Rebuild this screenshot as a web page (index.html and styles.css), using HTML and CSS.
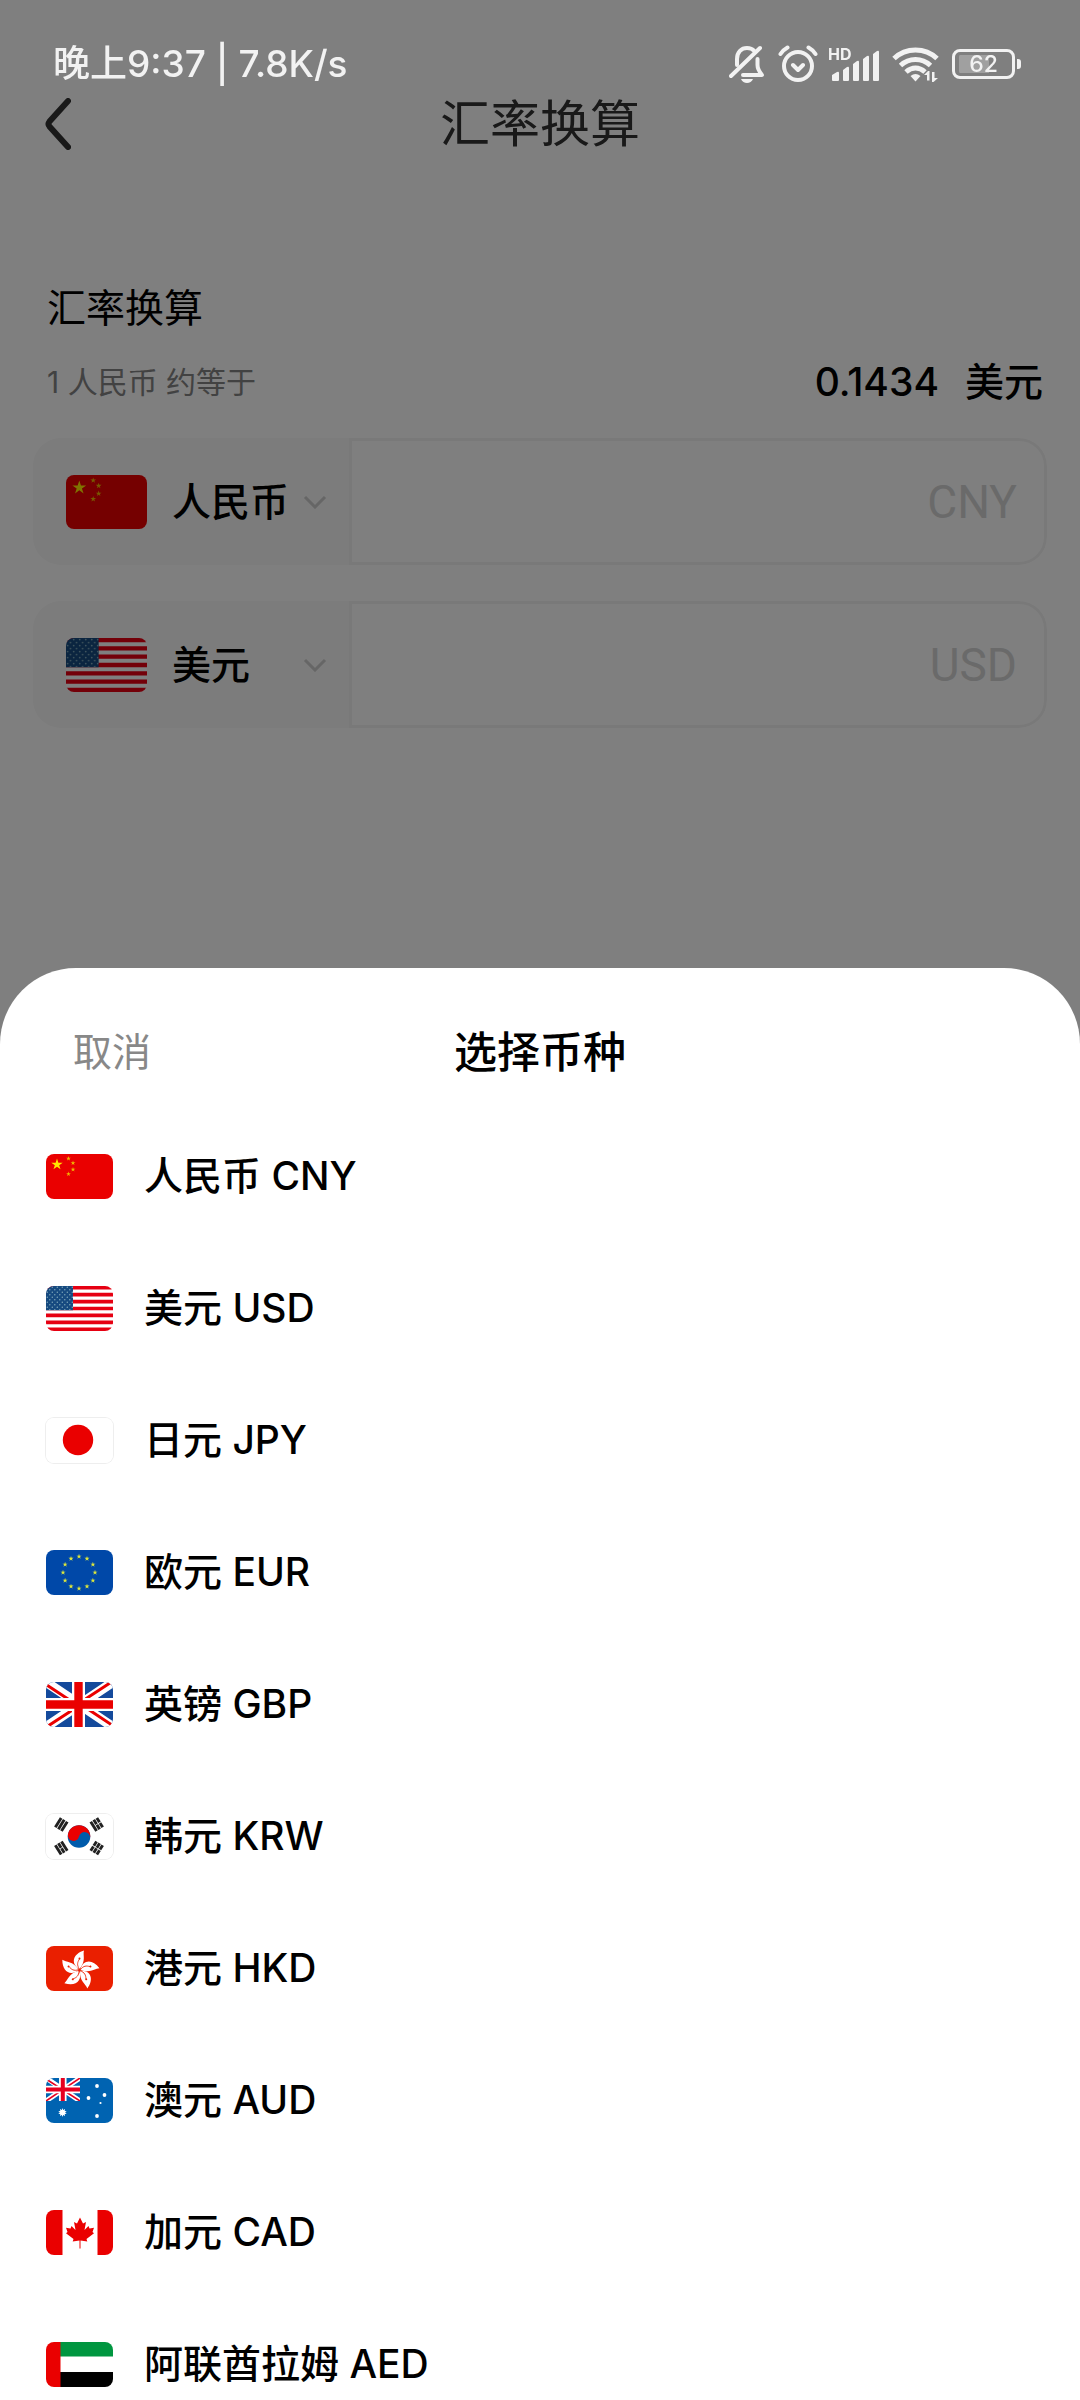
FILE: index.html
```html
<!DOCTYPE html>
<html lang="zh-CN">
<head>
<meta charset="utf-8">
<meta name="viewport" content="width=device-width, initial-scale=1">
<title>汇率换算</title>
<link rel="stylesheet" href="styles.css">
</head>
<body>

<svg class="defs" aria-hidden="true">
  <symbol id="star" viewBox="-1 -1 2 2" overflow="visible">
    <path d="M0-1 .225-.309 .951-.309 .363.118 .588.809 0 .382-.588.809-.363.118-.951-.309-.225-.309Z"/>
  </symbol>
  <pattern id="us-stars" width="5" height="5" patternUnits="userSpaceOnUse">
    <circle cx="1.3" cy="1.3" r=".7" fill="#7fa9bb"/>
    <circle cx="3.8" cy="3.8" r=".7" fill="#7fa9bb"/>
  </pattern>
  <symbol id="flag-cn" viewBox="0 0 67 45" preserveAspectRatio="none">
    <path fill="#ea0000" d="M0 0h67v45H0z"/>
    <g fill="#ffe600">
      <use href="#star" x="5" y="4.5" width="12" height="12"/>
      <g fill="#f0b400">
        <use href="#star" x="20" y="2" width="5" height="5"/>
        <use href="#star" x="24.5" y="6.5" width="5" height="5"/>
        <use href="#star" x="24.5" y="13" width="5" height="5"/>
        <use href="#star" x="20" y="17.5" width="5" height="5"/>
      </g>
    </g>
  </symbol>
  <symbol id="flag-us" viewBox="0 0 67 45" preserveAspectRatio="none">
    <path fill="#fff" d="M0 0h67v45H0z"/>
    <path stroke="#e60012" stroke-width="3.6" d="M0 1.73h67M0 8.65h67M0 15.58h67M0 22.5h67M0 29.42h67M0 36.35h67M0 43.27h67"/>
    <path fill="#164a80" d="M0 0h27v24.3H0z"/>
    <path fill="url(#us-stars)" d="M0 0h27v24.3H0z"/>
  </symbol>
  <symbol id="flag-jp" viewBox="0 0 67 45" preserveAspectRatio="none">
    <path fill="#fff" d="M0 0h67v45H0z"/>
    <circle cx="32" cy="22" r="15.2" fill="#ea0000"/>
  </symbol>
  <symbol id="flag-eu" viewBox="0 0 67 45" preserveAspectRatio="none">
    <path fill="#0048a8" d="M0 0h67v45H0z"/>
    <g fill="#dbe63c">
      <use href="#star" x="30.3" y="3.8" width="5.4" height="5.4"/>
      <use href="#star" x="38.3" y="5.9" width="5.4" height="5.4"/>
      <use href="#star" x="44.2" y="11.8" width="5.4" height="5.4"/>
      <use href="#star" x="46.3" y="19.8" width="5.4" height="5.4"/>
      <use href="#star" x="44.2" y="27.8" width="5.4" height="5.4"/>
      <use href="#star" x="38.3" y="33.7" width="5.4" height="5.4"/>
      <use href="#star" x="30.3" y="35.8" width="5.4" height="5.4"/>
      <use href="#star" x="22.3" y="33.7" width="5.4" height="5.4"/>
      <use href="#star" x="16.4" y="27.8" width="5.4" height="5.4"/>
      <use href="#star" x="14.3" y="19.8" width="5.4" height="5.4"/>
      <use href="#star" x="16.4" y="11.8" width="5.4" height="5.4"/>
      <use href="#star" x="22.3" y="5.9" width="5.4" height="5.4"/>
    </g>
  </symbol>
  <symbol id="flag-gb" viewBox="0 0 67 45" preserveAspectRatio="none">
    <path fill="#144a9c" d="M0 0h67v45H0z"/>
    <path stroke="#fff" stroke-width="9.5" d="M0 0l67 45M67 0L0 45"/>
    <path stroke="#ea0000" stroke-width="3" d="M0 2.5l25 16.5M67-1L38 18M-1 46l29-19M41 26.5l28 18.5"/>
    <path stroke="#fff" stroke-width="13" d="M32.5 0v45M0 22.5h67"/>
    <path stroke="#ea0000" stroke-width="8.4" d="M32.5 0v45M0 22.5h67"/>
  </symbol>
  <symbol id="flag-kr" viewBox="0 0 67 45" preserveAspectRatio="none">
    <path fill="#fff" d="M0 0h67v45H0z"/>
    <circle cx="33" cy="22.5" r="11.3" fill="#005bab"/>
    <path fill="#ea0000" d="M21.7 22.5A11.3 11.3 0 0 1 44.3 22.5A5.65 5.65 0 0 0 33 22.5A5.65 5.65 0 0 1 21.7 22.5Z" transform="rotate(12 33 22.5)"/>
    <g stroke="#222" stroke-width="2.9">
      <path d="M-5.5-3.6H5.5M-5.5 0H5.5M-5.5 3.6H5.5" transform="translate(15.3 10.5) rotate(-58)"/>
      <path d="M-5.5-3.6H-.4M.4-3.6H5.5M-5.5 0H-.4M.4 0H5.5M-5.5 3.6H5.5" transform="translate(50.7 10.5) rotate(58)"/>
      <path d="M-5.5-3.6H5.5M-5.5 0H-.4M.4 0H5.5M-5.5 3.6H5.5" transform="translate(15.3 34) rotate(58)"/>
      <path d="M-5.5-3.6H-.4M.4-3.6H5.5M-5.5 0H-.4M.4 0H5.5M-5.5 3.6H-.4M.4 3.6H5.5" transform="translate(50.7 34) rotate(-58)"/>
    </g>
  </symbol>
  <symbol id="hk-petal" overflow="visible">
    <path fill="#fff" d="M0-1C-9-6-7-16 4.5-19.5C3-15 7-9 0-1Z"/>
    <path fill="none" stroke="#ea1f00" stroke-width=".8" d="M0-1C-3-5-2-8 0-11"/>
    <circle cx="0" cy="-11.5" r="1" fill="#ea1f00"/>
  </symbol>
  <symbol id="flag-hk" viewBox="0 0 67 45" preserveAspectRatio="none">
    <path fill="#ea1f00" d="M0 0h67v45H0z"/>
    <g transform="translate(33.5 24)">
      <use href="#hk-petal"/>
      <use href="#hk-petal" transform="rotate(72)"/>
      <use href="#hk-petal" transform="rotate(144)"/>
      <use href="#hk-petal" transform="rotate(216)"/>
      <use href="#hk-petal" transform="rotate(288)"/>
    </g>
  </symbol>
  <symbol id="flag-au" viewBox="0 0 67 45" preserveAspectRatio="none">
    <path fill="#0063b1" d="M0 0h67v45H0z"/>
    <svg width="34" height="23" viewBox="0 0 34 23">
      <path stroke="#fff" stroke-width="5" d="M0 0l34 23M34 0L0 23"/>
      <path stroke="#e60020" stroke-width="1.6" d="M0 1l34 22M34 0L0 23"/>
      <path stroke="#fff" stroke-width="7.5" d="M16.8 0v23M0 11.5h34"/>
      <path stroke="#e60020" stroke-width="4" d="M16.8 0v23M0 11.5h34"/>
    </svg>
    <g fill="#fff">
      <use href="#star" x="12" y="30" width="9" height="9"/>
      <use href="#star" x="12" y="30" width="9" height="9" transform="rotate(36 16.5 34.5)"/>
      <circle cx="16.5" cy="34.5" r="2.8"/>
      <circle cx="51" cy="8" r="1.9"/>
      <circle cx="42.5" cy="20" r="1.9"/>
      <circle cx="58.5" cy="17" r="1.9"/>
      <circle cx="54.5" cy="25" r="1.1"/>
      <circle cx="51" cy="38" r="1.9"/>
    </g>
  </symbol>
  <symbol id="flag-ca" viewBox="0 0 67 45" preserveAspectRatio="none">
    <path fill="#fff" d="M0 0h67v45H0z"/>
    <path fill="#ea0000" d="M0 0h16.5v45H0zM51.5 0H67v45H51.5z"/>
    <path fill="#ea0000" d="M34 7.5l3 6 3-1.5-1.5 8 4-4 1 2.500 4.500-.8-1.500 4.300 1.500 1.200-7.500 5.800.8 2.500-6.800-1V38.500h-1V30.500l-6.800 1 .8-2.500-7.500-5.800 1.500-1.200-1.500-4.300 4.500.8 1-2.500 4 4-1.500-8 3 1.500Z"/>
  </symbol>
  <symbol id="flag-ae" viewBox="0 0 67 45" preserveAspectRatio="none">
    <path fill="#fff" d="M0 0h67v45H0z"/>
    <path fill="#009640" d="M14 0h53v14.5H14z"/>
    <path d="M14 30h53v15H14z"/>
    <path fill="#ea0000" d="M0 0h14.5v45H0z"/>
  </symbol>
</svg>

<div class="status-bar">
  <span class="status-text">晚上9:37 | 7.8K/s</span>
  <div class="status-icons">
    <svg viewBox="0 0 36 38" width="36" height="38" aria-hidden="true">
      <g fill="none" stroke="currentColor" stroke-width="4" stroke-linecap="round" stroke-linejoin="round">
        <path d="M8 20V14C8 7 12.5 3 18 3c3 0 5.5 1 7.3 3M28.5 14v6c0 4 2 7 4.5 10H14"/>
        <path d="M2 31L31 3"/>
      </g>
      <path fill="currentColor" d="M12 34h12c-1 2.5-3.5 4-6 4s-5-1.5-6-4z"/>
    </svg>
    <svg viewBox="0 0 40 38" width="40" height="38" aria-hidden="true">
      <g fill="none" stroke="currentColor" stroke-width="4" stroke-linecap="round" stroke-linejoin="round">
        <circle cx="20" cy="21" r="14"/>
        <path d="M15 20l5 5 5-5M2.5 9Q5 5 9.5 2.5M37.5 9Q35 5 30.5 2.5"/>
      </g>
    </svg>
    <span class="signal">
      <span class="signal-hd">HD</span>
      <svg viewBox="2 0 48 36" width="48" height="36" fill="currentColor" aria-hidden="true">
        <path d="M3 29l5-3q2-1 2 1v7q0 1-1 1H4q-1 0-1-1zM14 24l4-3q2-1 2 1v12q0 1-1 1h-4q-1 0-1-1zM24 18l4-3q2-1 2 1v18q0 1-1 1h-4q-1 0-1-1zM34 13l4-3q2-1 2 1v23q0 1-1 1h-4q-1 0-1-1zM44 8l4-3q2-1 2 1v28q0 1-1 1h-4q-1 0-1-1z"/>
      </svg>
    </span>
    <svg viewBox="0 0 47 36" width="47" height="36" aria-hidden="true">
      <g fill="none" stroke="currentColor" stroke-width="5">
        <path d="M2 12.5Q11 4 23.5 4T45 12.5M8.5 19.5Q15 13.5 23.5 13.5T38.5 19.5M14 26Q18.5 22 23.5 22T33 26"/>
      </g>
      <path fill="currentColor" d="M18.5 30q5-4 10 0l-5 5.5zM32 29l4-4h1.5v9.5H35V29zM40 26h2.5v6H46l-4.5 4H40z"/>
    </svg>
    <span class="battery"><span class="battery-body">62</span></span>
  </div>
</div>

<div class="page">
  <header class="nav">
    <button class="nav-back" type="button" aria-label="返回">
      <svg viewBox="0 0 26 52" width="26" height="52" aria-hidden="true">
        <path d="M23 3L4.5 23.5Q2.5 26 4.5 28.5L23 49" fill="none" stroke="#333" stroke-width="6" stroke-linecap="round"/>
      </svg>
    </button>
    <h1 class="nav-title">汇率换算</h1>
  </header>

  <main class="converter">
    <h2 class="converter-title">汇率换算</h2>
    <div class="rate">
      <span class="rate-from">1 人民币 约等于</span>
      <span class="rate-to"><span>0.1434</span><span>美元</span></span>
    </div>
    <div class="field">
      <button class="field-currency" type="button">
        <svg class="flag flag-large" aria-hidden="true"><use href="#flag-cn"/></svg>
        <span class="field-name">人民币</span>
        <svg class="chevron" viewBox="0 0 24 14" width="24" height="14" aria-hidden="true"><path d="M2 2l10 10L22 2"/></svg>
      </button>
      <input class="field-input" type="text" inputmode="decimal" placeholder="CNY" aria-label="人民币">
    </div>
    <div class="field">
      <button class="field-currency" type="button">
        <svg class="flag flag-large" aria-hidden="true"><use href="#flag-us"/></svg>
        <span class="field-name">美元</span>
        <svg class="chevron" viewBox="0 0 24 14" width="24" height="14" aria-hidden="true"><path d="M2 2l10 10L22 2"/></svg>
      </button>
      <input class="field-input" type="text" inputmode="decimal" placeholder="USD" aria-label="美元">
    </div>
  </main>
</div>

<div class="scrim">
  <section class="sheet" role="dialog" aria-labelledby="sheet-title">
    <header class="sheet-header">
      <button class="sheet-cancel" type="button">取消</button>
      <h2 class="sheet-title" id="sheet-title">选择币种</h2>
    </header>
    <ul class="currency-list">
      <li><button class="currency" type="button"><svg class="flag" aria-hidden="true"><use href="#flag-cn"/></svg>人民币 CNY</button></li>
      <li><button class="currency" type="button"><svg class="flag" aria-hidden="true"><use href="#flag-us"/></svg>美元 USD</button></li>
      <li><button class="currency" type="button"><svg class="flag flag-outlined" aria-hidden="true"><use href="#flag-jp"/></svg>日元 JPY</button></li>
      <li><button class="currency" type="button"><svg class="flag" aria-hidden="true"><use href="#flag-eu"/></svg>欧元 EUR</button></li>
      <li><button class="currency" type="button"><svg class="flag" aria-hidden="true"><use href="#flag-gb"/></svg>英镑 GBP</button></li>
      <li><button class="currency" type="button"><svg class="flag flag-outlined" aria-hidden="true"><use href="#flag-kr"/></svg>韩元 KRW</button></li>
      <li><button class="currency" type="button"><svg class="flag" aria-hidden="true"><use href="#flag-hk"/></svg>港元 HKD</button></li>
      <li><button class="currency" type="button"><svg class="flag" aria-hidden="true"><use href="#flag-au"/></svg>澳元 AUD</button></li>
      <li><button class="currency" type="button"><svg class="flag" aria-hidden="true"><use href="#flag-ca"/></svg>加元 CAD</button></li>
      <li><button class="currency" type="button"><svg class="flag" aria-hidden="true"><use href="#flag-ae"/></svg>阿联酋拉姆 AED</button></li>
    </ul>
  </section>
</div>

</body>
</html>
```
FILE: styles.css
```css
* {
  box-sizing: border-box;
}

body {
  margin: 0;
  height: 100vh;
  overflow: hidden;
  background: #fff;
  color: #000;
  font-family: Inter, "Noto Sans CJK SC", sans-serif;
  font-size: 39px;
  font-weight: 500;
  line-height: 60px;
}

button,
input {
  margin: 0;
  padding: 0;
  border: 0;
  background: none;
  color: inherit;
  font: inherit;
}

h1,
h2,
ul {
  margin: 0;
  padding: 0;
  font-size: inherit;
  font-weight: inherit;
  list-style: none;
}

.defs {
  position: absolute;
  width: 0;
  height: 0;
}

/* Status bar: stays bright above the scrim */
.status-bar {
  position: relative;
  z-index: 2;
  display: flex;
  align-items: center;
  justify-content: space-between;
  padding: 36px 59px 0 53px;
  height: 92px;
  color: #f2f2f2;
  font-size: 37px;
}

.status-icons {
  display: flex;
  align-items: center;
  gap: 13px;
}

.signal {
  position: relative;
  display: flex;
}

.signal-hd {
  position: absolute;
  top: 0;
  left: -3px;
  font-size: 16px;
  font-weight: 700;
  line-height: 16px;
}

.battery {
  display: flex;
  align-items: center;
  gap: 2px;
}

.battery-body {
  width: 63px;
  height: 30px;
  border: 3px solid currentColor;
  border-radius: 8px;
  padding: 3px 4px;
  background: linear-gradient(to right, #a0a0a0 62%, transparent 62%) content-box;
  font-size: 23px;
  line-height: 18px;
  text-align: center;
}

.battery::after {
  content: "";
  width: 4px;
  height: 10px;
  border-radius: 0 3px 3px 0;
  background: currentColor;
}

/* Converter page */
.nav {
  display: grid;
  grid-template-columns: 1fr auto 1fr;
  align-items: center;
  height: 64px;
  padding: 0 45px;
  color: #333;
}

.nav-back {
  justify-self: start;
  display: flex;
}

.nav-title {
  font-size: 50px;
  font-weight: 400;
  line-height: 64px;
}

.converter {
  padding: 122px 33px 0;
}

.converter-title {
  padding: 0 14px;
  font-weight: 400;
}

.rate {
  display: flex;
  align-items: center;
  justify-content: space-between;
  margin: 14px 0 26px;
  padding: 0 4px 0 14px;
}

.rate-from {
  color: #848484;
  font-size: 30px;
  font-weight: 400;
}

.rate-to {
  display: flex;
  gap: 26px;
}

.field {
  display: flex;
  height: 127px;
  margin-bottom: 36px;
  border-radius: 28px;
  overflow: hidden;
}

.field-currency {
  display: flex;
  align-items: center;
  width: 316px;
  padding: 0 22px 0 33px;
  background: #f8f8f8;
}

.field-name {
  flex: 1;
  margin-left: 25px;
  text-align: left;
}

.chevron {
  fill: none;
  stroke: #ccc;
  stroke-width: 3;
}

.field-input {
  flex: 1;
  min-width: 0;
  padding: 0 27px;
  border: 3px solid #f3f3f3;
  border-radius: 0 28px 28px 0;
  font-family: Roboto, "Noto Sans CJK SC", sans-serif;
  font-size: 46px;
  font-weight: 400;
  text-align: right;
}

.field-input::placeholder {
  color: #d4d4d4;
  opacity: 1;
}

.flag {
  flex: none;
  width: 67px;
  height: 45px;
  border-radius: 8px;
}

.flag-large {
  width: 81px;
  height: 54px;
}

.flag-outlined {
  box-shadow: 0 0 0 1px #eee;
}

/* Currency sheet */
.scrim {
  position: fixed;
  inset: 0;
  z-index: 1;
  display: flex;
  flex-direction: column;
  justify-content: flex-end;
  background: rgba(0, 0, 0, 0.5);
}

.sheet {
  overflow: hidden;
  border-radius: 76px 76px 0 0;
  background: #fff;
}

.sheet-header {
  display: grid;
  grid-template-columns: 1fr auto 1fr;
  align-items: center;
  padding: 52px 73px 26px;
  line-height: 64px;
}

.sheet-cancel {
  justify-self: start;
  color: #888;
  font-weight: 400;
}

.sheet-title {
  font-size: 43px;
}

.currency-list {
  max-height: calc(60vh - 150px);
  overflow-y: auto;
  scrollbar-width: none;
}

.currency {
  display: flex;
  align-items: center;
  gap: 31px;
  width: 100%;
  height: 132px;
  padding: 0 46px;
  text-align: left;
}
```
